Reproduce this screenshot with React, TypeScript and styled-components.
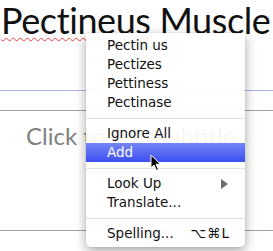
import React from "react";
import styled, { createGlobalStyle } from "styled-components";

const Global = createGlobalStyle`
  html, body {
    margin: 0;
    padding: 0;
    background: #ffffff;
  }
`;

// Slide
const Slide = styled.div`
  position: relative;
  width: 273px;
  height: 251px;
  overflow: hidden;
  background: #ffffff;
  display: flex;
  flex-direction: column;
`;
const TitleBox = styled.div`
  height: 91px;
  border-bottom: 1px solid #a8b6ee;
  box-sizing: border-box;
  padding: 1px 0 0 1px;
`;
const Title = styled.div`
  font-family: Lato, "Open Sans", sans-serif;
  font-size: 36px;
  line-height: 38px;
  color: #111111;
  white-space: nowrap;
  letter-spacing: -0.4px;
`;
const Misspelled = styled.span`
  text-decoration: underline wavy #f04040;
  text-decoration-thickness: 1px;
  text-underline-offset: 3px;
`;
const SubtitleBox = styled.div`
  margin-top: 19px;
  height: 121px;
  border-top: 1px solid #a2a2a2;
  border-bottom: 1px solid #a2a2a2;
  box-sizing: border-box;
  padding: 10px 0 0 26px;
`;
const Subtitle = styled.div`
  font-family: Lato, "Open Sans", sans-serif;
  font-size: 24px;
  line-height: 30px;
  color: #808080;
  white-space: nowrap;
`;

// Menu
const Menu = styled.div`
  position: absolute;
  left: 86px;
  top: 33px;
  width: 159px;
  box-sizing: border-box;
  padding: 3px 0 4px;
  background: rgba(255, 255, 255, 0.93);
  border-radius: 0 0 5px 5px;
  box-shadow: 0 4px 12px rgba(0, 0, 0, 0.35), 0 0 1px rgba(0, 0, 0, 0.3);
  font-family: "DejaVu Sans", sans-serif;
  font-size: 13.5px;
  color: #111111;
`;
const Item = styled.div<{ $active?: boolean }>`
  height: 19px;
  line-height: 19px;
  padding: 0 15px 0 21px;
  display: flex;
  align-items: center;
  justify-content: space-between;
  white-space: nowrap;
  color: ${(p) => (p.$active ? "#ffffff" : "#111111")};
  background: ${(p) =>
    p.$active ? "linear-gradient(#7585f7, #3c4ff0)" : "transparent"};
`;
const Separator = styled.div`
  height: 12px;
  display: flex;
  align-items: center;
  &::after {
    content: "";
    flex: 1;
    height: 1px;
    background: #e2e2e2;
  }
`;
const Shortcut = styled.span`
  letter-spacing: 1px;
`;
const Arrow = styled.span`
  width: 0;
  height: 0;
  border-top: 5px solid transparent;
  border-bottom: 5px solid transparent;
  border-left: 7px solid #6a6a6a;
  margin-right: 2px;
`;
const Pointer = styled.svg`
  position: absolute;
  left: 150px;
  top: 154px;
`;

const App = () => {
  return (
    <Slide>
      <Global />
      <TitleBox>
        <Title>
          <Misspelled>Pectineus</Misspelled> Muscle
        </Title>
      </TitleBox>
      <SubtitleBox>
        <Subtitle>Click to add subtitle</Subtitle>
      </SubtitleBox>
      <Menu>
        <Item>Pectin us</Item>
        <Item>Pectizes</Item>
        <Item>Pettiness</Item>
        <Item>Pectinase</Item>
        <Separator />
        <Item>Ignore All</Item>
        <Item $active>Add</Item>
        <Separator />
        <Item>
          Look Up
          <Arrow />
        </Item>
        <Item>Translate...</Item>
        <Separator />
        <Item>
          Spelling...
          <Shortcut>⌥⌘L</Shortcut>
        </Item>
      </Menu>
      <Pointer width="12" height="18" viewBox="0 0 12 18">
        <path
          d="M1 1 L1 14 L4 11 L6.5 16.5 L8.5 15.5 L6 10.2 L10.5 10.2 Z"
          fill="#000"
          stroke="#fff"
          strokeWidth="1"
          strokeLinejoin="round"
        />
      </Pointer>
    </Slide>
  );
};

export default App;
